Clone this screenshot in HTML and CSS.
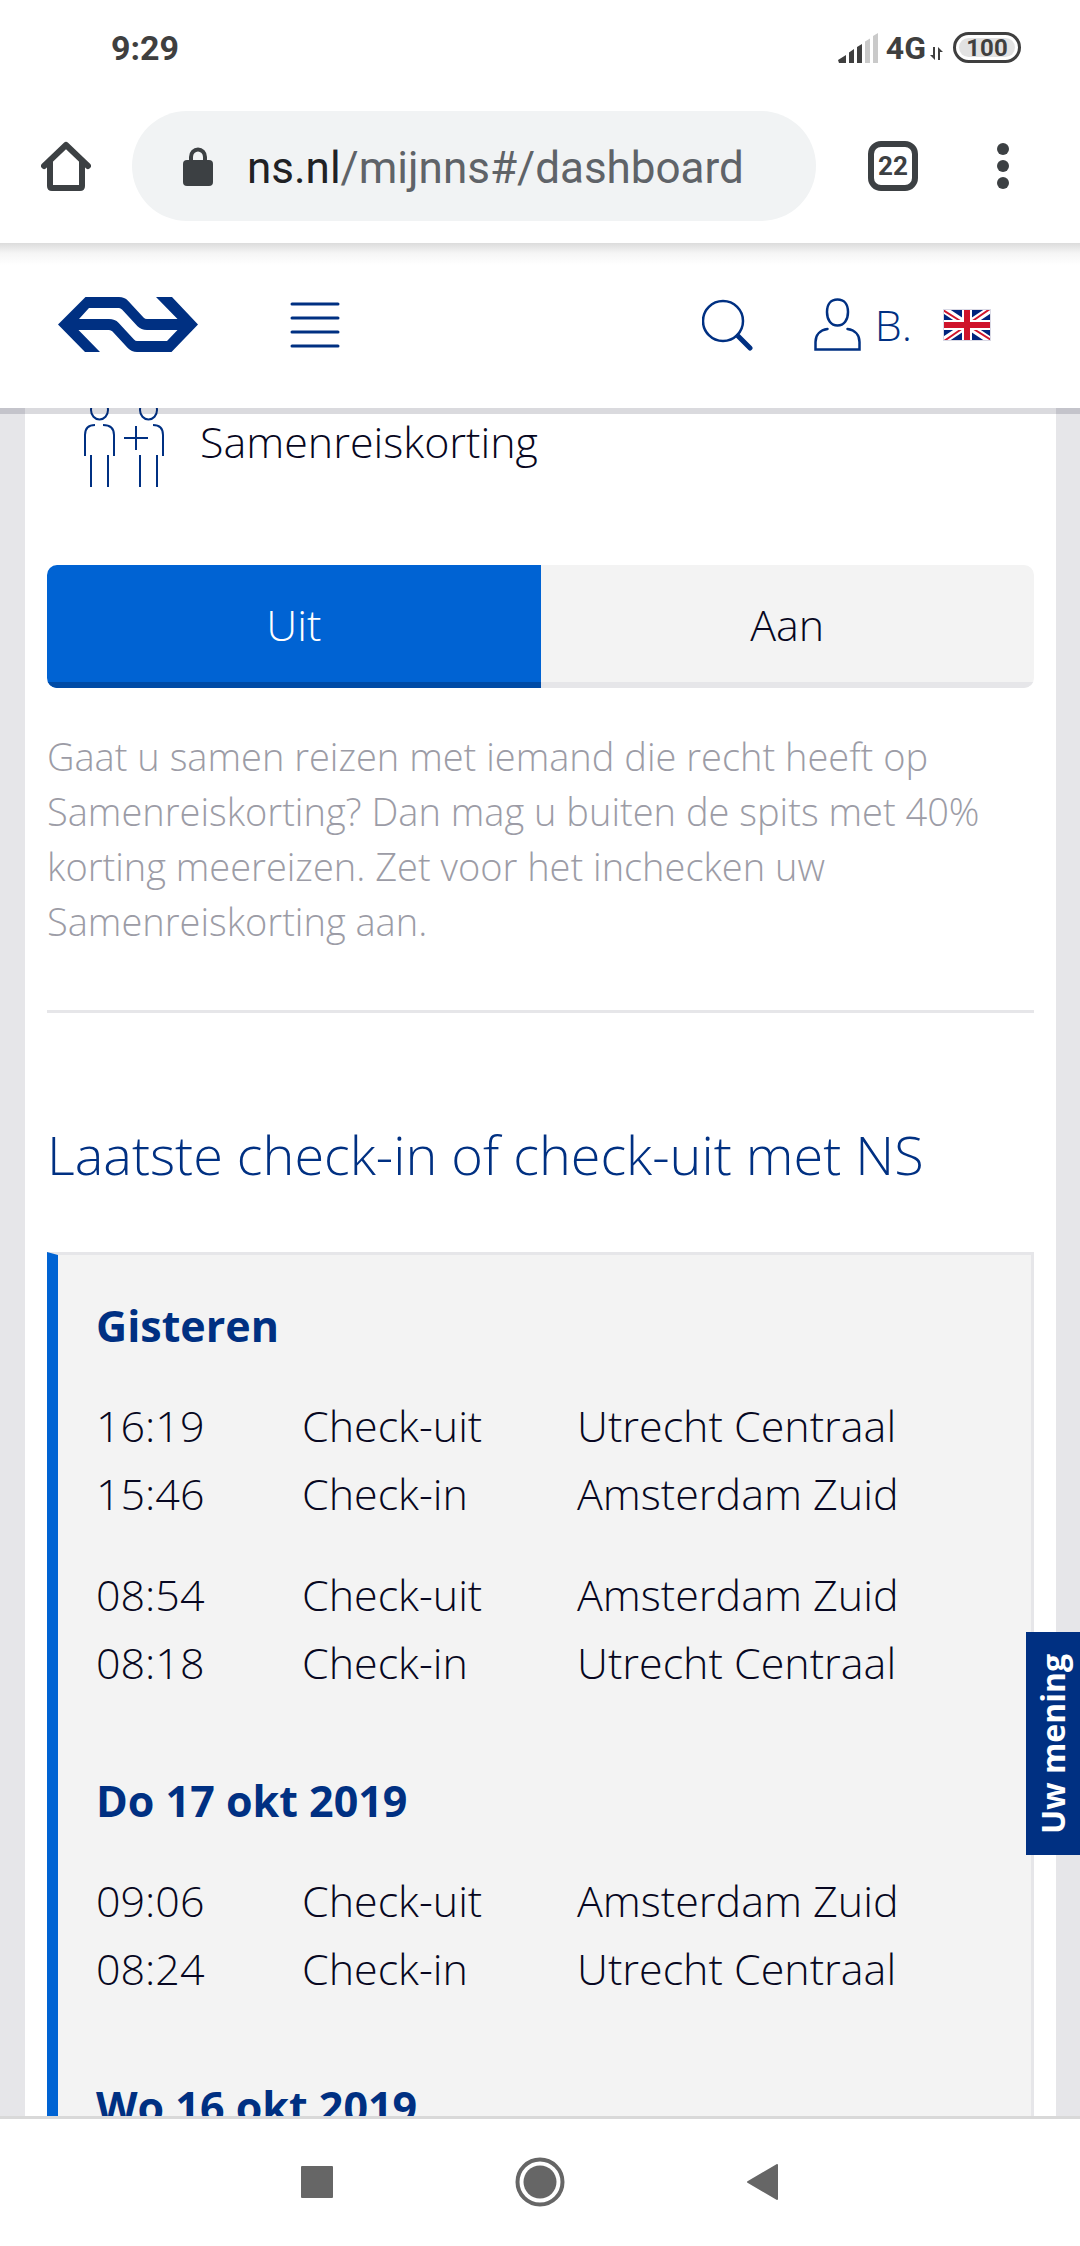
FILE: index.html
```html
<!DOCTYPE html>
<html lang="nl">
<head>
    <meta charset="UTF-8">
    <meta name="viewport" content="width=device-width, initial-scale=1.0">
    <title>Mijn NS - Dashboard</title>
    <link rel="stylesheet" href="styles.css">
</head>
<body>
    <div class="status-bar">
        <span class="clock">9:29</span>
        <div class="status-icons">
            <svg class="signal" width="41" height="30" viewBox="0 0 41 30">
                <path fill="#3f3f3f" d="M0 27 8 22V30H1ZM11 19.500 16 16V30H11ZM19 14 24 11V30H19Z"/>
                <path fill="#cacaca" d="M27 8.500 32 5.500V30H27ZM35 3 40 0V30H35Z"/>
            </svg>
            <span class="network">4G</span>
            <svg class="arrows" width="13" height="13" viewBox="0 0 13 13">
                <path fill="#3f3f3f" d="M3 0H5V13L0 8H3ZM8 0 13 5H10V13H8Z"/>
            </svg>
            <span class="battery"><span class="level">100</span></span>
        </div>
    </div>

    <div class="toolbar">
        <button class="icon-button" aria-label="Startpagina">
            <svg width="50" height="50" viewBox="0 0 50 50" fill="none" stroke="#3c4043" stroke-width="6" stroke-linejoin="round" stroke-linecap="round">
                <path d="M3 25 25 4 47 25M9 21V45Q9 47 11 47H39Q41 47 41 45V21"/>
            </svg>
        </button>
        <a class="address" href="#/dashboard">
            <svg width="30" height="39" viewBox="0 0 30 39">
                <rect y="13" width="30" height="26" rx="4" fill="#3c4043"/>
                <path d="M8 15V10a7 7.500 0 0 1 14 0V15" fill="none" stroke="#3c4043" stroke-width="4"/>
            </svg>
            <span class="url"><span class="host">ns.nl</span>/mijnns#/dashboard</span>
        </a>
        <button class="tabs">22</button>
        <button class="icon-button more" aria-label="Meer">
            <svg width="12" height="46" viewBox="0 0 12 46" fill="#3c4043">
                <circle cx="6" cy="6" r="6"/>
                <circle cx="6" cy="23" r="6"/>
                <circle cx="6" cy="40" r="6"/>
            </svg>
        </button>
    </div>

    <header class="site-header">
        <a class="logo" href="#" aria-label="NS">
            <svg width="140" height="55" viewBox="0 0 140 55">
                <path fill="#003082" fill-rule="evenodd" d="M0 27.500 27.500 0H61Q66.500 0 70 3.700L85.500 20.500Q87 22 89 22H119.500L98 0H114L140 27.500 113.500 55H79Q73.500 55 70 51.300L54.500 34.500Q53 33 51 33H20.500L42 55H27ZM21 22H51Q57 22 60.500 25.700L76 42.500Q77.500 44 79 44H109L119.500 33H89Q83 33 79.500 29.300L64 12.500Q62.500 11 61 11H31Z"/>
            </svg>
        </a>
        <button class="icon-button menu" aria-label="Menu">
            <svg width="50" height="46" viewBox="0 0 50 46" stroke="#003082" stroke-width="3" stroke-linecap="round">
                <path d="M2 2H48M2 16H48M2 30H48M2 44H48"/>
            </svg>
        </button>
        <button class="icon-button search" aria-label="Zoeken">
            <svg width="52" height="52" viewBox="0 0 52 52" fill="none" stroke="#003082" stroke-linecap="round">
                <circle cx="21" cy="22" r="20" stroke-width="2.500"/>
                <path d="M36 37 48 49" stroke-width="5"/>
            </svg>
        </button>
        <a class="account" href="#">
            <svg width="47" height="53" viewBox="0 0 47 53" fill="none" stroke="#003082" stroke-width="2.500" stroke-linecap="round">
                <path d="M23.500 1.500C30 1.500 34 6 34 14S30 27.500 23.500 27.500 13 22 13 14 17 1.500 23.500 1.500Z"/>
                <path d="M13.500 31C6 32 1.500 37 1.500 44V51.500H45.500V44C45.500 37 41 32 33.500 31"/>
            </svg>
            <span>B.</span>
        </a>
        <a class="flag" href="#" aria-label="English">
            <svg width="48" height="32" viewBox="0 0 48 32">
                <rect width="48" height="32" fill="#00247d"/>
                <path d="M0 0 48 32M48 0 0 32" stroke="#fff" stroke-width="7"/>
                <path d="M0 1 19 13M48 31 29 19M1 32 20 19M47 0 28 13" stroke="#cf142b" stroke-width="2"/>
                <path d="M24 0V32M0 16H48" stroke="#fff" stroke-width="10"/>
                <path d="M24 0V32M0 16H48" stroke="#cf142b" stroke-width="6"/>
                <rect x="0.500" y="0.500" width="47" height="31" fill="none" stroke="#d8d8e4"/>
            </svg>
        </a>
    </header>

    <div class="viewport">
        <main class="content">
            <div class="discount">
                <svg width="82" height="88" viewBox="0 0 82 88" fill="none" stroke="#003082" stroke-width="2">
                    <ellipse cx="16.500" cy="11" rx="8.500" ry="9.500"/>
                    <ellipse cx="65.500" cy="11" rx="8.500" ry="9.500"/>
                    <path d="M12 26C5 26 2 29 2 36V57M20 26C27 26 31 29 31 36V57M8 56V88M25 56V88"/>
                    <path d="M70 26C77 26 80 29 80 36V57M57 56V88M74 56V88M41 39H65M53 27V51"/>
                </svg>
                <span>Samenreiskorting</span>
            </div>

            <div class="toggle">
                <button class="active" aria-pressed="true">Uit</button>
                <button aria-pressed="false">Aan</button>
            </div>

            <p class="hint">Gaat u samen reizen met iemand die recht heeft op Samenreiskorting? Dan mag u buiten de spits met 40% korting meereizen. Zet voor het inchecken uw Samenreiskorting aan.</p>

            <hr>

            <h2>Laatste check-in of check-uit met NS</h2>

            <section class="travel-card">
                <h3>Gisteren</h3>
                <table>
                    <tbody>
                        <tr><td>16:19</td><td>Check-uit</td><td>Utrecht Centraal</td></tr>
                        <tr><td>15:46</td><td>Check-in</td><td>Amsterdam Zuid</td></tr>
                    </tbody>
                    <tbody>
                        <tr><td>08:54</td><td>Check-uit</td><td>Amsterdam Zuid</td></tr>
                        <tr><td>08:18</td><td>Check-in</td><td>Utrecht Centraal</td></tr>
                    </tbody>
                </table>
                <h3>Do 17 okt 2019</h3>
                <table>
                    <tbody>
                        <tr><td>09:06</td><td>Check-uit</td><td>Amsterdam Zuid</td></tr>
                        <tr><td>08:24</td><td>Check-in</td><td>Utrecht Centraal</td></tr>
                    </tbody>
                </table>
                <h3>Wo 16 okt 2019</h3>
            </section>
        </main>
        <button class="feedback">Uw mening</button>
    </div>

    <nav class="system-nav">
        <button class="icon-button" aria-label="Recent">
            <svg width="32" height="32" viewBox="0 0 32 32"><rect width="32" height="32" rx="1" fill="#666"/></svg>
        </button>
        <button class="icon-button" aria-label="Home">
            <svg width="50" height="50" viewBox="0 0 50 50">
                <circle cx="25" cy="25" r="22.500" fill="none" stroke="#666" stroke-width="4"/>
                <circle cx="25" cy="25" r="16.500" fill="#666"/>
            </svg>
        </button>
        <button class="icon-button" aria-label="Terug">
            <svg width="32" height="36" viewBox="0 0 32 36"><path d="M1 18 30 1V35Z" fill="#666" stroke="#666" stroke-width="2" stroke-linejoin="round"/></svg>
        </button>
    </nav>
</body>
</html>
```
FILE: styles.css
```css
* {
    box-sizing: border-box;
}

body {
    font-family: "Open Sans", "Noto Sans", sans-serif;
    font-size: 43px;
    font-weight: 330;
    line-height: 68px;
    color: #070721;
    background-color: #fff;
    display: flex;
    flex-direction: column;
    height: 100vh;
    margin: 0;
    overflow: hidden;
}

svg {
    display: block;
    flex: none;
}

button {
    font: inherit;
    color: inherit;
    background: none;
    border: none;
    padding: 0;
    cursor: pointer;
}

a {
    color: inherit;
    text-decoration: none;
}

/* phone status bar */
.status-bar {
    display: flex;
    justify-content: space-between;
    align-items: center;
    flex: none;
    height: 95px;
    padding: 0 59px 0 111px;
    font-family: Roboto, sans-serif;
    font-size: 34px;
    font-weight: 700;
    line-height: 40px;
    color: #3f3f3f;
}

.status-icons {
    display: flex;
    align-items: center;
}

.network {
    margin-left: 7px;
    font-size: 32px;
}

.arrows {
    margin: 12px 10px 0 4px;
}

.battery {
    width: 68px;
    height: 31px;
    padding: 3px;
    border: 3px solid #3f3f3f;
    border-radius: 16px;
}

.level {
    display: block;
    height: 19px;
    border-radius: 10px;
    background-color: #e2e2e2;
    font-size: 24px;
    line-height: 20px;
    text-align: center;
}

/* browser toolbar */
.toolbar {
    display: flex;
    align-items: center;
    flex: none;
    height: 148px;
    padding: 0 71px 6px 41px;
    font-family: Roboto, sans-serif;
}

.address {
    display: flex;
    align-items: center;
    flex: 1;
    gap: 34px;
    height: 110px;
    margin: 0 52px 0 41px;
    padding: 0 51px;
    border-radius: 55px;
    background-color: #f1f3f4;
    font-size: 44px;
    font-weight: 400;
    line-height: 52px;
    color: #5f6368;
}

.url {
    padding-top: 3px;
}

.host {
    color: #202124;
}

.tabs {
    width: 50px;
    height: 50px;
    border: 6px solid #3c4043;
    border-radius: 13px;
    color: #3c4043;
    font-size: 26px;
    font-weight: 700;
    line-height: 38px;
}

.more {
    margin-left: 79px;
}

/* site header */
.site-header {
    position: relative;
    z-index: 1;
    display: flex;
    align-items: center;
    flex: none;
    height: 165px;
    padding: 0 89px 2px 58px;
    color: #003082;
    background: linear-gradient(#dcdcdc, #f5f5f5 10px, #fff 22px);
    box-shadow: 0 6px 0 rgba(7, 7, 33, 0.15);
}

.menu {
    margin-left: 92px;
}

.search {
    margin-left: auto;
}

.account {
    display: flex;
    align-items: center;
    gap: 14px;
    margin: 0 31px 0 60px;
}

/* page */
.viewport {
    position: relative;
    flex: 1;
    min-height: 0;
    overflow: hidden;
    padding: 0 24px 0 25px;
    background-color: #e6e6e9;
}

.content {
    min-height: 100%;
    padding: 0 22px;
    background-color: #fff;
}

.discount {
    display: flex;
    align-items: flex-end;
    gap: 35px;
    margin-top: -9px;
    padding-left: 36px;
}

.discount span {
    padding-bottom: 11px;
}

.toggle {
    display: flex;
    margin-top: 78px;
    border-radius: 10px;
    overflow: hidden;
}

.toggle button {
    flex: 1;
    height: 123px;
    padding-bottom: 3px;
    background-color: #f3f3f3;
    box-shadow: inset 0 -6px 0 #e6e6e9;
}

.toggle .active {
    color: #fff;
    background-color: #0063d3;
    box-shadow: inset 0 -6px 0 #004ba6;
}

.hint {
    margin: 41px 0 61px;
    font-size: 38px;
    line-height: 55px;
    color: #9c9ca6;
}

hr {
    height: 3px;
    margin: 0;
    border: none;
    background-color: #e6e6e9;
}

h2 {
    margin: 104px 0 61px;
    font-size: 54px;
    font-weight: 330;
    line-height: 74px;
    color: #003082;
}

.travel-card {
    padding: 37px 38px;
    border: 3px solid #e6e6e9;
    border-left: 11px solid #0063d3;
    background-color: #f3f3f3;
}

h3 {
    margin: 0 0 32px;
    font-size: 43px;
    font-weight: 700;
    color: #003082;
}

table {
    width: 100%;
    margin-bottom: 70px;
    border-collapse: collapse;
    table-layout: fixed;
}

td {
    padding: 0;
}

td:first-child {
    width: 206px;
}

td:nth-child(2) {
    width: 275px;
}

tbody + tbody tr:first-child td {
    padding-top: 33px;
}

.feedback {
    position: absolute;
    right: 0;
    top: 1224px;
    width: 54px;
    height: 223px;
    writing-mode: vertical-rl;
    transform: rotate(180deg);
    background-color: #003082;
    color: #fff;
    font-size: 32px;
    font-weight: 700;
    line-height: 54px;
}

/* phone navigation */
.system-nav {
    display: flex;
    justify-content: center;
    align-items: center;
    flex: none;
    gap: 182px;
    height: 130px;
    padding-bottom: 2px;
    border-top: 3px solid #d9d9d9;
}
```
